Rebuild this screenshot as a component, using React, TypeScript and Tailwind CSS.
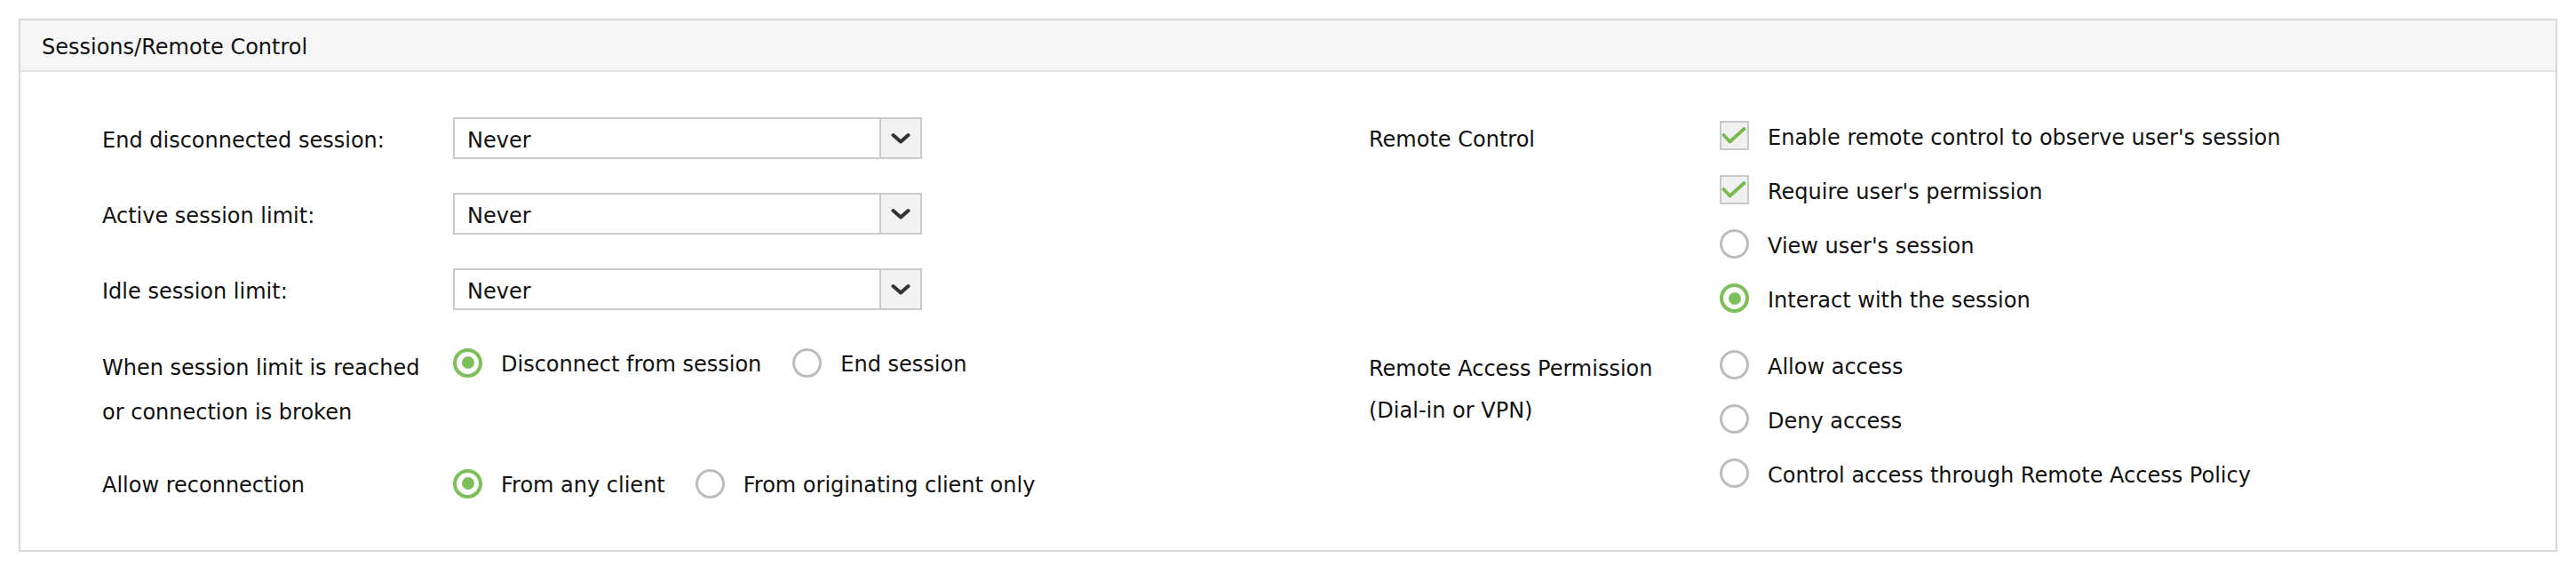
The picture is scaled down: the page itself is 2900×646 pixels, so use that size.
import React from "react";

const font = { fontFamily: '"DejaVu Sans", Verdana, sans-serif' };

function Select() {
  return (
    <div className="flex h-[47px] w-[528px] border-2 border-[#cbcbcb] bg-white">
      <div className="flex flex-1 items-center pl-[14px] pt-[4px] text-[24px] leading-none text-[#111]">Never</div>
      <div className="flex w-[46px] items-center justify-center border-l-2 border-[#cbcbcb] bg-[#f2f2f2]">
        <svg width="22" height="14" viewBox="0 0 22 14">
          <path d="M2.5 3 L11 10.5 L19.5 3" fill="none" stroke="#333" strokeWidth="4" strokeLinecap="round" strokeLinejoin="round" />
        </svg>
      </div>
    </div>
  );
}

function Radio({ checked }: { checked?: boolean }) {
  if (checked) {
    return (
      <div className="flex h-[33px] w-[33px] shrink-0 items-center justify-center rounded-full border-[4px] border-[#7dbf5a] bg-white">
        <div className="h-[14px] w-[14px] rounded-full bg-[#7dbf5a]" />
      </div>
    );
  }
  return <div className="h-[33px] w-[33px] shrink-0 rounded-full border-[3px] border-[#bdbdbd] bg-white" />;
}

function Checkbox() {
  return (
    <div className="flex h-[33px] w-[33px] shrink-0 items-center justify-center border-2 border-[#c9c9c9] bg-[#f0f0f0]">
      <svg width="29" height="29" viewBox="2 2 29 29">
        <path d="M4.5 16 L11.5 23.5 L27.5 9" fill="none" stroke="#78b94f" strokeWidth="3.8" strokeLinecap="round" strokeLinejoin="round" />
      </svg>
    </div>
  );
}

function Option({ children, control }: { children: React.ReactNode; control: React.ReactNode }) {
  return (
    <div className="flex items-center gap-[21px]">
      {control}
      <span className="pt-[4px] text-[24px] leading-none text-[#111] whitespace-nowrap">{children}</span>
    </div>
  );
}

function StackOption({ children, control }: { children: React.ReactNode; control: React.ReactNode }) {
  return (
    <div className="flex h-[61px] items-center gap-[21px]">
      {control}
      <span className="pt-[4px] text-[24px] leading-none text-[#111] whitespace-nowrap">{children}</span>
    </div>
  );
}

export default function App() {
  return (
    <div className="min-h-[646px] bg-white pt-[21px]" style={font}>
      <div className="mx-[21px] border-2 border-[#d8d8d8] bg-white">
        <div className="flex h-[58px] items-center border-b-2 border-[#e3e3e3] bg-[#f6f6f6] pl-[24px] pt-[4px] text-[24px] leading-none text-[#111]">
          Sessions/Remote Control
        </div>
        <div className="grid grid-cols-2">
          {/* Left half */}
          <div className="flex flex-col gap-[38px] pb-[58px] pl-[92px] pt-[51px] text-[24px] text-[#111]">
            <div className="flex h-[47px] items-center">
              <div className="w-[395px] shrink-0 pt-[4px] leading-none">End disconnected session:</div>
              <Select />
            </div>
            <div className="flex h-[47px] items-center">
              <div className="w-[395px] shrink-0 pt-[4px] leading-none">Active session limit:</div>
              <Select />
            </div>
            <div className="flex h-[47px] items-center">
              <div className="w-[395px] shrink-0 pt-[4px] leading-none">Idle session limit:</div>
              <Select />
            </div>
            <div className="flex items-start">
              <div className="w-[395px] shrink-0 pt-[2px] leading-[50px]">
                When session limit is reached
                <br />
                or connection is broken
              </div>
              <div className="flex h-[42px] items-center gap-[35px]">
                <Option control={<Radio checked />}>Disconnect from session</Option>
                <Option control={<Radio />}>End session</Option>
              </div>
            </div>
            <div className="flex h-[34px] items-center">
              <div className="w-[395px] shrink-0 pt-[4px] leading-none">Allow reconnection</div>
              <div className="flex items-center gap-[34px]">
                <Option control={<Radio checked />}>From any client</Option>
                <Option control={<Radio />}>From originating client only</Option>
              </div>
            </div>
          </div>
          {/* Right half */}
          <div className="flex flex-col gap-[14px] pl-[91px] pt-[41px] text-[24px] text-[#111]">
            <div className="flex items-start">
              <div className="flex h-[61px] w-[395px] shrink-0 items-center pt-[8px] leading-none">Remote Control</div>
              <div className="flex flex-col">
                <StackOption control={<Checkbox />}>Enable remote control to observe user's session</StackOption>
                <StackOption control={<Checkbox />}>Require user's permission</StackOption>
                <StackOption control={<Radio />}>View user's session</StackOption>
                <StackOption control={<Radio checked />}>Interact with the session</StackOption>
              </div>
            </div>
            <div className="flex items-start">
              <div className="w-[395px] shrink-0 pt-[12px] leading-[47px]">
                Remote Access Permission
                <br />
                (Dial-in or VPN)
              </div>
              <div className="flex flex-col">
                <StackOption control={<Radio />}>Allow access</StackOption>
                <StackOption control={<Radio />}>Deny access</StackOption>
                <StackOption control={<Radio />}>Control access through Remote Access Policy</StackOption>
              </div>
            </div>
          </div>
        </div>
      </div>
    </div>
  );
}
